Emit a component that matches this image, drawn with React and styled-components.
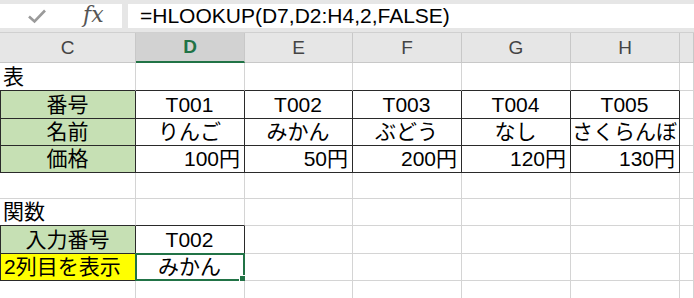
import React from 'react'
import styled, { createGlobalStyle } from 'styled-components'

const GlobalStyle = createGlobalStyle`
  html, body { margin: 0; padding: 0; background: #ffffff; }
  body { font-family: "Liberation Sans", "Noto Sans CJK JP", sans-serif; overflow: hidden; }
`

const Screen = styled.div`
  width: 694px;
  height: 298px;
  overflow: hidden;
  background: #ffffff;
  display: flex;
  flex-direction: column;
`

const FormulaBar = styled.div`
  height: 31px;
  padding-top: 4px;
  padding-bottom: 4px;
  background: #e6e6e6;
  display: flex;
  gap: 6px;
  border-bottom: 1px solid #d0d0d0;
`

const NameTools = styled.div`
  width: 122px;
  background: #ffffff;
  display: flex;
  align-items: center;
  gap: 36px;
  padding-left: 27px;
  box-sizing: border-box;
`

const FxLabel = styled.span`
  font-family: "DejaVu Serif", "Liberation Serif", serif;
  font-style: italic;
  font-size: 22px;
  color: #555555;
  line-height: 1;
  margin-top: -3px;
`

const FormulaInput = styled.div`
  flex: 1;
  background: #ffffff;
  display: flex;
  align-items: center;
  padding-left: 12px;
  font-family: "Liberation Sans", Arial, sans-serif;
  font-size: 21px;
  color: #000000;
`

const Sheet = styled.div`
  display: grid;
  grid-template-columns: 136px 109px 108px 109px 109px 109px 1fr;
  grid-template-rows: 30px 28px 28px 27px 27px 26px 27px 28px 27px 20px;
`

const Head = styled.div`
  background: ${(p) => (p.$active ? '#d2d2d2' : '#e6e6e6')};
  color: ${(p) => (p.$active ? '#217346' : '#444444')};
  font-family: "Liberation Sans", Arial, sans-serif;
  font-weight: ${(p) => (p.$active ? 'bold' : 'normal')};
  font-size: 19px;
  display: flex;
  align-items: center;
  justify-content: center;
  border-right: 1px solid #c8c8c8;
  border-bottom: ${(p) => (p.$active ? '2px solid #217346' : '1px solid #c8c8c8')};
  box-sizing: border-box;
`

const Cell = styled.div`
  position: relative;
  box-sizing: border-box;
  background: ${(p) => p.$fill || '#ffffff'};
  border-right: 1px solid ${(p) => (p.$frame ? '#2a2a2a' : '#d4d4d4')};
  border-bottom: 1px solid ${(p) => (p.$frame || p.$under ? '#2a2a2a' : '#d4d4d4')};
  border-left: ${(p) => (p.$edge ? '1px solid #2a2a2a' : 'none')};
  display: flex;
  align-items: flex-end;
  justify-content: ${(p) => p.$align || 'flex-start'};
  padding: 0 4px 1px 3px;
  font-size: 21px;
  line-height: 24px;
  color: #000000;
  white-space: nowrap;
  overflow: visible;
`

const Selection = styled.div`
  position: absolute;
  left: -1px;
  top: -1px;
  right: -1px;
  bottom: -1px;
  border: 2px solid #217346;
  pointer-events: none;
`

const Handle = styled.div`
  position: absolute;
  right: -5px;
  bottom: -5px;
  width: 7px;
  height: 7px;
  background: #217346;
  border: 1px solid #ffffff;
`

const CheckIcon = () => (
  <svg width="20" height="16" viewBox="0 0 20 16">
    <path d="M2 8.5 L7.5 13.5 L18 2.5" fill="none" stroke="#9a9a9a" strokeWidth="2.6" />
  </svg>
)

const cols = ['C', 'D', 'E', 'F', 'G', 'H', '']
const codes = ['T001', 'T002', 'T003', 'T004', 'T005']
const names = ['りんご', 'みかん', 'ぶどう', 'なし', 'さくらんぼ']
const prices = ['100円', '50円', '200円', '120円', '130円']
const green = '#c6e0b4'

const Blank = ({ n, under }) =>
  Array.from({ length: n }).map((_, i) => <Cell key={i} $under={under && i < n - 1} />)

const App = () => {
  return (
    <Screen>
      <GlobalStyle />
      <FormulaBar>
        <NameTools>
          <CheckIcon />
          <FxLabel>fx</FxLabel>
        </NameTools>
        <FormulaInput>=HLOOKUP(D7,D2:H4,2,FALSE)</FormulaInput>
      </FormulaBar>
      <Sheet>
        {cols.map((c) => (
          <Head key={c || 'x'} $active={c === 'D'}>{c}</Head>
        ))}

        <Cell $under>表</Cell>
        <Blank n={6} under />

        <Cell $fill={green} $frame $edge $align="center">番号</Cell>
        {codes.map((v) => (
          <Cell key={v} $frame $align="center">{v}</Cell>
        ))}
        <Cell />

        <Cell $fill={green} $frame $edge $align="center">名前</Cell>
        {names.map((v) => (
          <Cell key={v} $frame $align="center">{v}</Cell>
        ))}
        <Cell />

        <Cell $fill={green} $frame $edge $align="center">価格</Cell>
        {prices.map((v) => (
          <Cell key={v} $frame $align="flex-end">{v}</Cell>
        ))}
        <Cell />

        <Blank n={7} />

        <Cell $under>関数</Cell>
        <Cell $under />
        <Blank n={5} />

        <Cell $fill={green} $frame $edge $align="center">入力番号</Cell>
        <Cell $frame $align="center">T002</Cell>
        <Blank n={5} />

        <Cell $fill="#ffff00" $frame $edge>2列目を表示</Cell>
        <Cell $frame $align="center">
          みかん
          <Selection>
            <Handle />
          </Selection>
        </Cell>
        <Blank n={5} />

        <Blank n={7} />
      </Sheet>
    </Screen>
  )
}

export default App
